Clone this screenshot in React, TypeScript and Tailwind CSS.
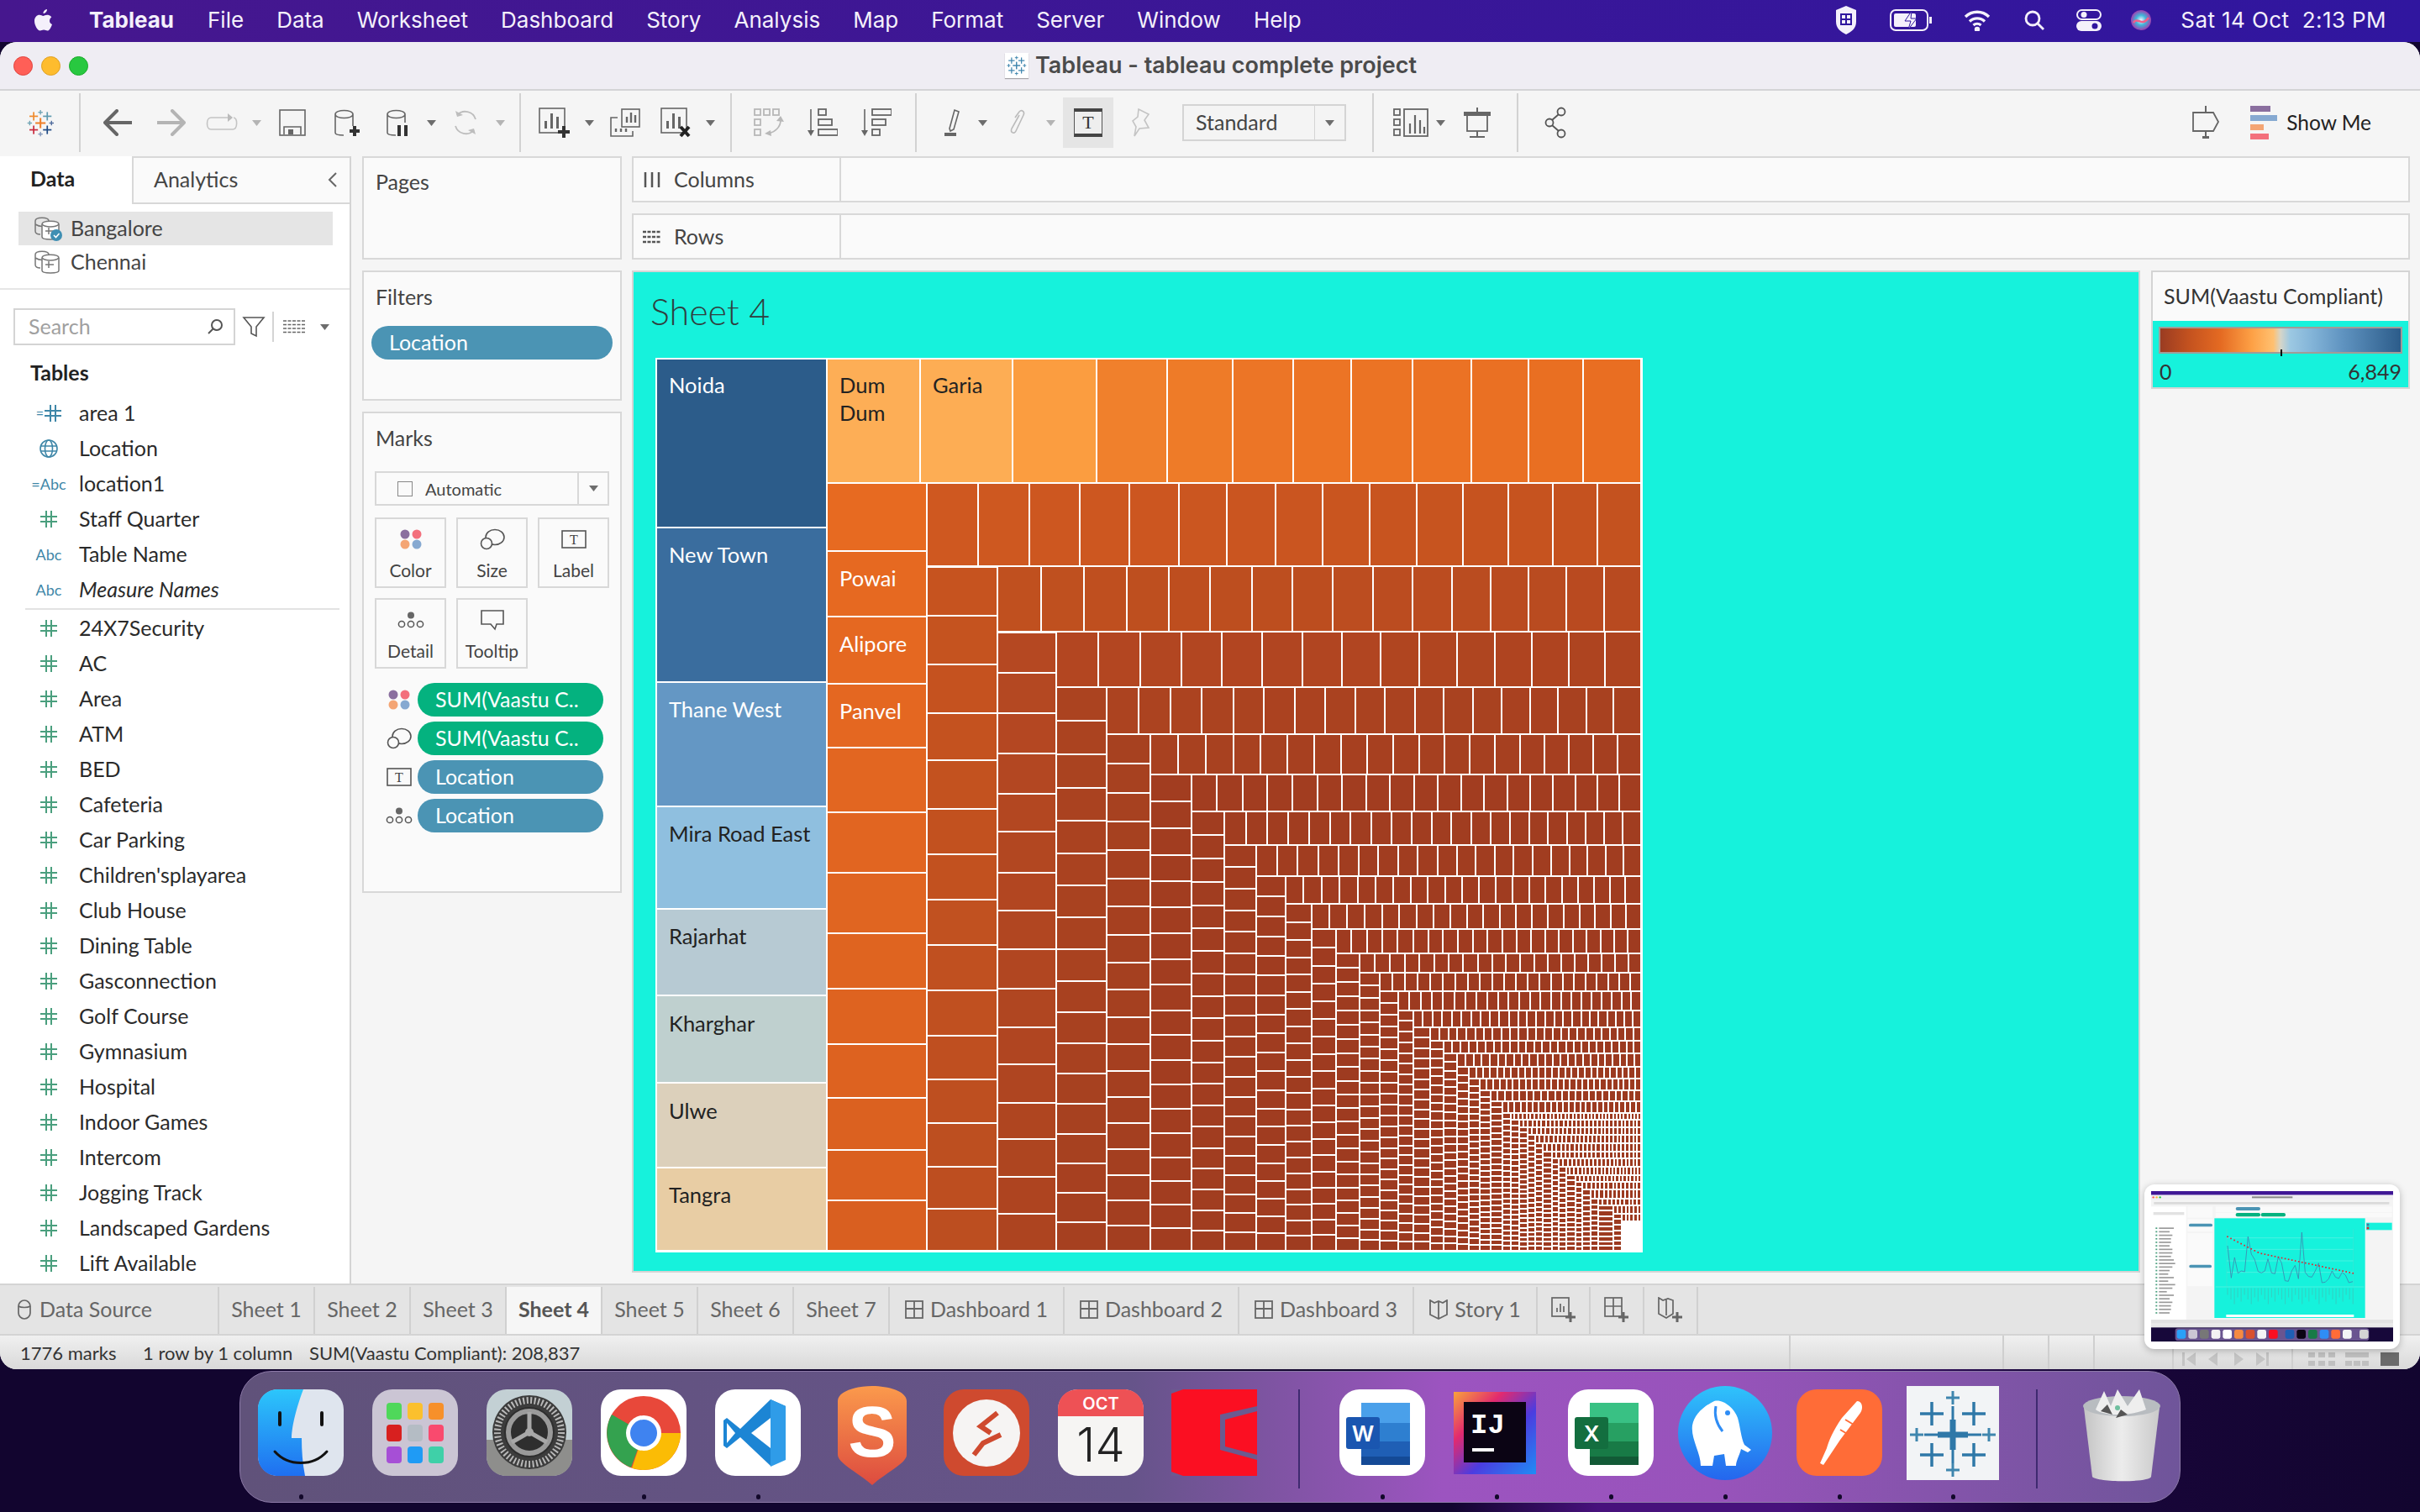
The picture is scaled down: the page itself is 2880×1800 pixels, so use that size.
import React from "react"

const hex = (c: string) => [1, 3, 5].map((i) => parseInt(c.slice(i, i + 2), 16))
const mix = (a: string, b: string, t: number) => {
  const x = hex(a)
  const y = hex(b)
  return `rgb(${x.map((v, i) => Math.round(v + (y[i] - v) * t)).join(",")})`
}

// treemap shells: every step is one column on the left and one row on top
const xs = [983.6, 1103, 1187, 1257, 1317, 1369, 1418, 1457, 1495, 1529.5, 1561, 1589.5, 1617.6, 1642, 1663.6, 1681.5, 1702, 1717.5, 1734, 1748, 1761, 1773.5, 1787.5, 1797.6, 1807.7, 1818, 1827, 1836, 1846.6, 1855, 1863.6, 1875, 1883, 1892.7, 1901.5, 1919.5, 1929.5]
const rowBottoms = [674, 752, 818, 874, 922, 966, 1006.4, 1042.9, 1076.4, 1106.4, 1134.6, 1158.2, 1180.4, 1202.5, 1222.9, 1238.6, 1254.3, 1270.4, 1284, 1298.2, 1310.7, 1325, 1333, 1342, 1351.4, 1360.7, 1371.4, 1379.3, 1389.3, 1398.6, 1407, 1416, 1426.8, 1435, 1444.6, 1453.6]
const rowCellW = [57, 48, 45, 35, 31, 28, 24, 22.4, 20, 19.6, 17.5, 17, 14, 12.5, 11, 10, 9.5, 9, 8, 7.3, 8, 7, 4.5, 5, 5, 5, 5, 5, 5, 4.5, 4.5, 5, 5, 5, 5, 5]
const colCellH = [0, 0, 0, 37, 32, 30, 26, 24, 22, 20, 20, 16, 14, 13, 12, 11.5, 10, 9.3, 8.6, 8, 7, 7, 6.5, 6.5, 6, 6, 6, 6, 6, 6, 6, 6, 6, 6, 6, 6]
const fixedCols: Record<number, number[]> = {
  0: [575, 656, 734, 814, 890, 967, 1039, 1111, 1177, 1243, 1307, 1369, 1429, 1489],
  1: [675, 733, 791, 849, 905, 963, 1017, 1071, 1125, 1179, 1233, 1285, 1337, 1389, 1439, 1489],
  2: [753, 801, 849, 897, 945, 990, 1039, 1084, 1130, 1177, 1223, 1267, 1313, 1356, 1401, 1445, 1489],
}
const colTones = [["#e76a21", "#d95f20"], ["#c6531f", "#bc4e20"], ["#b54822", "#ad4420"], ["#ab4320", "#a64020"], ["#a74120", "#a33e20"]]
const rowTones = [["#cf5820", "#c4521f"], ["#c0501f", "#b84a20"], ["#b34621", "#ae4420"], ["#ac4320", "#a84120"], ["#a84120", "#a53f20"]]

const split = (a: number, b: number, n: number) => {
  const weights = Array.from({ length: n }, (_, k) => 1.08 - (0.16 * k) / Math.max(n - 1, 1))
  const total = weights.reduce((s, v) => s + v, 0)
  const out = [a]
  weights.forEach((w) => out.push(out[out.length - 1] + ((b - a) * w) / total))
  return out
}

type Cell = { x: number; y: number; w: number; h: number; fill: string }
const cells: Cell[] = []
const put = (x0: number, y0: number, x1: number, y1: number, fill: string) => {
  const x = Math.round(x0) + 1
  const y = Math.round(y0) + 1
  cells.push({ x, y, w: Math.max(Math.round(x1) - x - 1, 1), h: Math.max(Math.round(y1) - y - 1, 1), fill })
}

const blues: [number, number, string][] = [[427, 628, "#2c5c8a"], [628, 812, "#3a6d9e"], [812, 960, "#6497c4"], [960, 1082, "#8fbfdf"], [1082, 1185, "#b7cad3"], [1185, 1289, "#bfd0cf"], [1289, 1390, "#dcd0bb"], [1390, 1489, "#e8cda4"]]
blues.forEach(([a, b, c]) => put(781, a, 983.6, b, c))

const topRow = [983.6, 1095, 1205, 1304.7, 1388.5, 1466.8, 1538.7, 1608, 1681, 1751, 1818.7, 1884, 1953]
const topColors = ["#fdae56", "#fdad54", "#fb9d40", "#f0802c", "#ee7b28", "#ec7526", "#ec7425", "#eb7324", "#eb7224", "#ea7023", "#e96f22", "#e96e22"]
topColors.forEach((c, i) => put(topRow[i], 427, topRow[i + 1], 574.5, c))

xs.slice(0, -1).forEach((x, i) => {
  const next = xs[i + 1]
  const top = i === 0 ? 575 : rowBottoms[i - 1]
  const colEdges = fixedCols[i] ?? split(top, 1489, Math.max(Math.round((1489 - top) / colCellH[i]), 1))
  const late = mix("#a53f20", "#9c3a20", Math.min(i / 14, 1))
  colEdges.slice(0, -1).forEach((y, k) => {
    const t = k / Math.max(colEdges.length - 2, 1)
    put(x, y, next, colEdges[k + 1], colTones[i] ? mix(colTones[i][0], colTones[i][1], t) : late)
  })
  const n = Math.max(Math.round((1953 - next) / rowCellW[i]), 1)
  const rowEdges = split(next, 1953, n)
  rowEdges.slice(0, -1).forEach((e, k) => {
    const t = k / Math.max(n - 1, 1)
    put(e, top, rowEdges[k + 1], rowBottoms[i], rowTones[i] ? mix(rowTones[i][0], rowTones[i][1], t) : late)
  })
})

const labels: [string, number, number, string][] = [
  ["Noida", 796, 468, "#ffffff"], ["New Town", 796, 670, "#ffffff"], ["Thane West", 796, 854, "#ffffff"],
  ["Mira Road East", 796, 1002, "#222222"], ["Rajarhat", 796, 1124, "#222222"], ["Kharghar", 796, 1228, "#222222"],
  ["Ulwe", 796, 1332, "#222222"], ["Tangra", 796, 1432, "#222222"], ["Dum", 999, 468, "#222222"], ["Dum", 999, 501, "#222222"],
  ["Garia", 1110, 468, "#222222"], ["Powai", 999, 698, "#ffffff"], ["Alipore", 999, 776, "#ffffff"], ["Panvel", 999, 856, "#ffffff"],
]

const Treemap = () => (
  <svg width="1175" height="1065" viewBox="780 426 1175 1065" className="block">
    <rect x="780" y="426" width="1175" height="1065" fill="#ffffff" />
    {cells.map((c, i) => (
      <rect key={i} x={c.x} y={c.y} width={c.w} height={c.h} fill={c.fill} />
    ))}
    {labels.map(([t, x, y, c], i) => (
      <text key={i} x={x} y={y} fill={c} fontFamily="Lato, sans-serif" fontSize="25.5">{t}</text>
    ))}
  </svg>
)

/* ---------- small icons ---------- */
const Cross = ({ x, y, s, t, c }: { x: number; y: number; s: number; t: number; c: string }) => (
  <g fill={c}>
    <rect x={x - s} y={y - t / 2} width={s * 2} height={t} />
    <rect x={x - t / 2} y={y - s} width={t} height={s * 2} />
  </g>
)

const TableauMark = ({ size, mono }: { size: number; mono?: string }) => (
  <svg width={size} height={size} viewBox="95 88 98 98">
    <Cross x={119} y={113} s={15} t={5} c={mono ?? "#ef8a2c"} />
    <Cross x={143} y={99} s={8} t={4} c={mono ?? "#6fa3b3"} />
    <Cross x={167} y={113} s={15} t={5} c={mono ?? "#5f9bb0"} />
    <Cross x={105} y={137} s={8} t={4} c={mono ?? "#6fa3b3"} />
    <Cross x={143} y={137} s={18} t={6} c={mono ?? "#ef7f2a"} />
    <Cross x={182} y={137} s={8} t={4} c={mono ?? "#4e6a9c"} />
    <Cross x={119} y={161} s={15} t={5} c={mono ?? "#c8283c"} />
    <Cross x={143} y={176} s={8} t={4} c={mono ?? "#7f94b8"} />
    <Cross x={167} y={161} s={15} t={5} c={mono ?? "#1f4a85"} />
  </svg>
)

const Tri = ({ c = "#6d6d6d" }: { c?: string }) => (
  <svg width="11" height="7" viewBox="0 0 11 7"><path d="M0 0h11L5.5 7z" fill={c} /></svg>
)
const Sep = ({ cls }: { cls: string }) => <div className={`w-[2px] h-[70px] bg-[#d2d2d2] ${cls}`} />

const Svg = ({ w, h, cls, children }: { w: number; h: number; cls?: string; children: React.ReactNode }) => (
  <svg width={w} height={h} viewBox={`0 0 ${w} ${h}`} fill="none" className={cls}>{children}</svg>
)

const Chart = ({ x = 0, y = 0, c = "#666666" }: { x?: number; y?: number; c?: string }) => (
  <g transform={`translate(${x} ${y})`} fill={c}>
    <rect x="7" y="16" width="3" height="9" />
    <rect x="14" y="7" width="3" height="18" />
    <rect x="21" y="11" width="3" height="14" />
  </g>
)

const SwatchDots = () => (
  <svg width="26" height="24" viewBox="0 0 26 24">
    <circle cx="6" cy="6" r="5.5" fill="#8a6f9f" /><circle cx="20" cy="6" r="5.5" fill="#f3707c" />
    <circle cx="6" cy="18" r="5.5" fill="#f4a574" /><circle cx="20" cy="18" r="5.5" fill="#86a9d1" />
  </svg>
)
const SizeGlyph = () => (
  <svg width="30" height="26" viewBox="0 0 30 26" fill="none" stroke="#555" strokeWidth="1.6">
    <ellipse cx="18" cy="10.5" rx="11" ry="9" /><circle cx="8" cy="18" r="6.5" fill="#fafafa" />
  </svg>
)
const LabelGlyph = () => (
  <svg width="30" height="22" viewBox="0 0 30 22" fill="none">
    <rect x="1" y="1" width="28" height="20" stroke="#555" strokeWidth="1.6" />
    <text x="15" y="17" textAnchor="middle" fontFamily="Liberation Serif, serif" fontSize="16" fill="#444">T</text>
  </svg>
)
const DetailGlyph = () => (
  <svg width="32" height="20" viewBox="0 0 32 20" fill="none" stroke="#555" strokeWidth="1.5">
    <circle cx="16" cy="4.5" r="4" fill="#666" stroke="none" />
    <circle cx="5" cy="15" r="3.6" /><circle cx="16" cy="15" r="3.6" /><circle cx="27" cy="15" r="3.6" />
  </svg>
)
const TooltipGlyph = () => (
  <svg width="30" height="26" viewBox="0 0 30 26" fill="none" stroke="#555" strokeWidth="1.6">
    <path d="M2 2h26v16H20l-2 6-5-6H2z" />
  </svg>
)
const HashIcon = ({ c = "#4a9f7e" }: { c?: string }) => (
  <svg width="20" height="20" viewBox="0 0 20 20" stroke={c} strokeWidth="2">
    <path d="M7 0v20M13 0v20M0 7h20M0 13h20" />
  </svg>
)
const Cyl = ({ check }: { check?: boolean }) => (
  <svg width="34" height="30" viewBox="0 0 34 30" fill="none" stroke="#777" strokeWidth="1.5">
    <path d="M2 6c0-5 16-5 16 0v4c-5 3-11 3-16 0zM2 10v8c0 2 2 4 6 4" />
    <path d="M10 10c0-5 20-5 20 0v15c0 4-20 4-20 0z" fill="#fff" />
    <path d="M10 10c4 4 16 4 20 0M14 18h10M18 14v8" />
    {check && <circle cx="27" cy="23" r="7" fill="#3f8fb3" stroke="none" />}
    {check && <path d="M24 23l2.5 2.5 4-4.5" stroke="#fff" strokeWidth="1.6" />}
  </svg>
)

const Row = ({ icon, name, italic }: { icon: React.ReactNode; name: string; italic?: boolean }) => (
  <div className="flex items-center h-[42px]">
    <div className="w-[94px] shrink-0 pr-[12px] flex justify-end">
      <div className="min-w-[48px] flex justify-center">{icon}</div>
    </div>
    <span className={italic ? "italic" : ""}>{name}</span>
  </div>
)
const Abc = ({ eq }: { eq?: boolean }) => (
  <span className="text-[18px] text-[#3f87a8]">{eq ? "=Abc" : "Abc"}</span>
)

const measures = ["24X7Security", "AC", "Area", "ATM", "BED", "Cafeteria", "Car Parking", "Children'splayarea", "Club House", "Dining Table", "Gasconnection", "Golf Course", "Gymnasium", "Hospital", "Indoor Games", "Intercom", "Jogging Track", "Landscaped Gardens", "Lift Available"]

const DataPane = () => (
  <div className="w-[418px] h-full shrink-0 bg-white border-r-[2px] border-[#d4d4d4] font-[Lato] text-[25px] text-[#2a2a2a] overflow-hidden">
    <div className="flex h-[57px] text-[25px]">
      <div className="w-[157px] flex items-center pl-[36px] pb-[4px] font-bold text-[#222]">Data</div>
      <div className="flex-1 flex items-center justify-between pl-[24px] pr-[14px] pb-[2px] bg-[#fafafa] border-l-[2px] border-b-[2px] border-t-[2px] border-[#d8d8d8] text-[#444]">
        Analytics
        <svg width="12" height="20" viewBox="0 0 12 20" fill="none" stroke="#666" strokeWidth="2"><path d="M10 2L2 10l8 8" /></svg>
      </div>
    </div>
    <div className="mx-[22px] mt-[9px] h-[40px] w-[374px] bg-[#e5e5e5] flex items-center pl-[18px] gap-[10px] text-[#444]"><Cyl check />Bangalore</div>
    <div className="mx-[22px] h-[40px] flex items-center pl-[18px] gap-[10px] text-[#444]"><Cyl />Chennai</div>
    <div className="mt-[11px] h-[2px] bg-[#e6e6e6]" />
    <div className="flex items-center mt-[22px] ml-[16px] h-[44px]">
      <div className="w-[264px] h-[44px] border-[2px] border-[#d4d4d4] flex items-center justify-between pl-[16px] pr-[12px] text-[#a0a0a0]">
        Search
        <svg width="20" height="20" viewBox="0 0 20 20" fill="none" stroke="#555" strokeWidth="2"><circle cx="12" cy="8" r="6" /><path d="M7.5 12.5L2 18" /></svg>
      </div>
      <svg className="ml-[8px]" width="28" height="26" viewBox="0 0 28 26" fill="none" stroke="#555" strokeWidth="1.6"><path d="M2 2h24L17 13v11l-6-3v-8z" /></svg>
      <div className="w-[2px] h-[36px] bg-[#d4d4d4] ml-[8px]" />
      <svg className="ml-[11px]" width="26" height="16" viewBox="0 0 26 16" stroke="#666" strokeWidth="1.5"><path d="M0 1h26M0 5.5h26M0 10h26M0 14.5h26" strokeDasharray="4 1.5" /></svg>
      <div className="ml-[18px]"><Tri /></div>
    </div>
    <div className="mt-[18px] pl-[36px] h-[28px] leading-[28px] font-bold text-[#222]">Tables</div>
    <div className="mt-[14px]">
      <Row icon={<div className="flex items-center gap-[1px] text-[#3f87a8]"><span className="text-[16px]">=</span><HashIcon c="#3f87a8" /></div>} name="area 1" />
      <Row icon={<svg width="24" height="24" viewBox="0 0 24 24" fill="none" stroke="#3f87a8" strokeWidth="1.6"><circle cx="12" cy="12" r="10" /><ellipse cx="12" cy="12" rx="4.5" ry="10" /><path d="M2.5 9h19M2.5 15h19" /></svg>} name="Location" />
      <Row icon={<Abc eq />} name="location1" />
      <Row icon={<HashIcon />} name="Staff Quarter" />
      <Row icon={<Abc />} name="Table Name" />
      <Row icon={<Abc />} name="Measure Names" italic />
    </div>
    <div className="ml-[30px] mr-[12px] my-[1px] h-[2px] bg-[#e2e2e2]" />
    <div className="mt-[1px]">
      {measures.map((m) => <Row key={m} icon={<HashIcon />} name={m} />)}
    </div>
  </div>
)

const MarkBtn = ({ icon, name }: { icon: React.ReactNode; name: string }) => (
  <div className="h-[84px] border-[2px] border-[#d8d8d8] flex flex-col items-center">
    <div className="h-[48px] flex items-center justify-center">{icon}</div>
    <div className="text-[21px] text-[#444] leading-[26px]">{name}</div>
  </div>
)
const Pill = ({ green, children }: { green?: boolean; children: React.ReactNode }) => (
  <div className={`w-[221px] h-[40px] rounded-full flex items-center pl-[21px] text-white text-[25px] ${green ? "bg-[#04b27f]" : "bg-[#4b94b4]"}`}>{children}</div>
)
const ShelfTitle = ({ children }: { children: React.ReactNode }) => (
  <div className="pl-[14px] text-[25px] text-[#444] leading-[30px]">{children}</div>
)

const Cards = () => (
  <div className="w-[334px] shrink-0 pl-[13px] pr-[12px] flex flex-col gap-[13px] font-[Lato]">
    <div className="h-[123px] shrink-0 bg-[#fafafa] border-[2px] border-[#d8d8d8] pt-[13px]"><ShelfTitle>Pages</ShelfTitle></div>
    <div className="h-[155px] shrink-0 bg-[#fafafa] border-[2px] border-[#d8d8d8] pt-[14px]">
      <ShelfTitle>Filters</ShelfTitle>
      <div className="mx-[9px] mt-[20px] h-[40px] rounded-full bg-[#4b94b4] text-white text-[25px] flex items-center pl-[21px]">Location</div>
    </div>
    <div className="h-[573px] shrink-0 bg-[#fafafa] border-[2px] border-[#d8d8d8] pt-[14px]">
      <ShelfTitle>Marks</ShelfTitle>
      <div className="mx-[13px] mt-[25px] h-[41px] border-[2px] border-[#d8d8d8] flex items-center">
        <div className="w-[18px] h-[18px] border-[1.5px] border-[#888] ml-[25px]" />
        <span className="ml-[15px] flex-1 text-[20px] text-[#444]">Automatic</span>
        <div className="w-[36px] h-full border-l-[2px] border-[#d8d8d8] flex items-center justify-center"><Tri /></div>
      </div>
      <div className="mx-[13px] mt-[14px] grid grid-cols-3 gap-x-[12px] gap-y-[12px]">
        <MarkBtn icon={<SwatchDots />} name="Color" />
        <MarkBtn icon={<SizeGlyph />} name="Size" />
        <MarkBtn icon={<LabelGlyph />} name="Label" />
        <MarkBtn icon={<DetailGlyph />} name="Detail" />
        <MarkBtn icon={<TooltipGlyph />} name="Tooltip" />
      </div>
      <div className="mt-[17px] ml-[24px] flex flex-col gap-[6px]">
        {[
          [<SwatchDots key="a" />, "SUM(Vaastu C..", true],
          [<SizeGlyph key="b" />, "SUM(Vaastu C..", true],
          [<LabelGlyph key="c" />, "Location", false],
          [<DetailGlyph key="d" />, "Location", false],
        ].map(([ic, t, g], i) => (
          <div key={i} className="flex items-center">
            <div className="w-[36px] flex justify-center">{ic as React.ReactNode}</div>
            <div className="ml-[4px]"><Pill green={g as boolean}>{t as string}</Pill></div>
          </div>
        ))}
      </div>
    </div>
  </div>
)

const Shelf = ({ icon, name }: { icon: React.ReactNode; name: string }) => (
  <div className="h-[55px] shrink-0 bg-[#fafafa] border-[2px] border-[#d8d8d8] flex items-stretch font-[Lato] text-[25px] text-[#444]">
    <div className="w-[247px] border-r-[2px] border-[#d8d8d8] flex items-center pl-[11px] gap-[15px]">{icon}{name}</div>
  </div>
)

const Legend = () => (
  <div className="w-[308px] h-[141px] border-[2px] border-[#d4d4d4] font-[Lato] text-[25px] text-[#333] shrink-0">
    <div className="h-[58px] bg-[#fafafa] flex items-center pl-[13px]">SUM(Vaastu Compliant)</div>
    <div className="h-[79px] bg-[#16f2dc] pt-[7px] px-[7px]">
      <div className="relative h-[32px] border-[2px] border-[#a09c98] bg-[linear-gradient(90deg,#9a3c22_0%,#c4521f_12%,#e46a22_25%,#fda045_38%,#ffc070_47%,#d6d5c8_50%,#9cc8e2_54%,#83b4d8_63%,#5f93c0_76%,#2c5c8a_100%)]">
        <div className="absolute left-[143px] top-[25px] w-[2px] h-[8px] bg-black" />
      </div>
      <div className="flex justify-between mt-[4px] px-[1px] leading-[34px]"><span>0</span><span>6,849</span></div>
    </div>
  </div>
)

/* ---------- toolbar ---------- */
const Toolbar = () => (
  <div className="h-[78px] bg-[#f5f5f5] flex items-center pb-[2px] shrink-0">
    <div className="ml-[32px]"><TableauMark size={33} /></div>
    <Sep cls="ml-[29px]" />
    <Svg w={34} h={32} cls="ml-[27px]"><path d="M16 2L2 16l14 14M2 16h32" stroke="#666" strokeWidth="4" strokeLinecap="round" strokeLinejoin="round" /></Svg>
    <Svg w={34} h={32} cls="ml-[30px]"><path d="M18 2l14 14-14 14M32 16H0" stroke="#b4b4b4" strokeWidth="4" strokeLinecap="round" strokeLinejoin="round" /></Svg>
    <Svg w={40} h={22} cls="ml-[23px]"><path d="M28 5H7C1 5 1 19 7 19h26c6 0 6-14 1-14" stroke="#c4c4c4" strokeWidth="1.6" /><path d="M27 0l6 5-6 5z" fill="#bbb" /></Svg>
    <div className="ml-[16px]"><Tri c="#b4b4b4" /></div>
    <Svg w={32} h={32} cls="ml-[21px]"><rect x="1" y="1" width="30" height="30" stroke="#666" strokeWidth="1.6" /><path d="M6 30V21h20v9" stroke="#666" strokeWidth="1.6" /><rect x="11" y="24" width="6" height="6" fill="#666" /></Svg>
    <Svg w={30} h={32} cls="ml-[34px]"><path d="M1 6c0-6 21-6 21 0 0 6-21 6-21 0zM1 6v22c0 2 4 3 10 3M22 6v14" stroke="#666" strokeWidth="1.6" /><path d="M18 26h12M24 20v12" stroke="#333" strokeWidth="4" /></Svg>
    <Svg w={26} h={32} cls="ml-[32px]"><path d="M1 6c0-6 21-6 21 0 0 6-21 6-21 0zM1 6v22c0 2 4 3 10 3M22 6v10" stroke="#666" strokeWidth="1.6" /><path d="M15 19v13M23 19v13" stroke="#333" strokeWidth="4" /></Svg>
    <div className="ml-[22px]"><Tri /></div>
    <Svg w={32} h={32} cls="ml-[19px]"><path d="M28 12A13 13 0 0 0 6 7M4 20a13 13 0 0 0 22 5" stroke="#bdbdbd" strokeWidth="1.8" /><path d="M4 2l2 7 7-2zM28 30l-2-7-7 2z" fill="#bdbdbd" /></Svg>
    <div className="ml-[20px]"><Tri c="#b4b4b4" /></div>
    <Sep cls="ml-[17px]" />
    <Svg w={37} h={36} cls="ml-[21px]"><rect x="1" y="1" width="30" height="29" stroke="#666" strokeWidth="1.6" /><Chart /><path d="M23 29h14M30 22v14" stroke="#333" strokeWidth="4" /></Svg>
    <div className="ml-[18px]"><Tri /></div>
    <Svg w={36} h={34} cls="ml-[19px]"><rect x="14" y="1" width="21" height="21" stroke="#666" strokeWidth="1.6" /><path d="M9 11H1v22h26v-6" stroke="#666" strokeWidth="1.6" /><path d="M20 17v-7M25 17V5M30 17v-9M7 28v-4M13 28v-4M19 28v-4" stroke="#666" strokeWidth="2.4" /></Svg>
    <Svg w={36} h={36} cls="ml-[24px]"><rect x="1" y="1" width="30" height="29" stroke="#666" strokeWidth="1.6" /><Chart /><path d="M24 23l10 11M34 23L24 34" stroke="#222" strokeWidth="4" /></Svg>
    <div className="ml-[18px]"><Tri /></div>
    <Sep cls="ml-[18px]" />
    <Svg w={36} h={34} cls="ml-[26px]"><g stroke="#b8b8b8" strokeWidth="1.8"><rect x="1" y="1" width="7" height="7" /><rect x="12" y="1" width="7" height="7" /><rect x="23" y="1" width="7" height="7" /><rect x="1" y="13" width="7" height="7" /><rect x="1" y="25" width="7" height="7" /><path d="M32 14c0 8-6 14-15 16" /></g><path d="M27 15l5-6 4 7zM13 30l7-4 1 7z" fill="#b8b8b8" /></Svg>
    <Svg w={36} h={34} cls="ml-[28px]"><path d="M4 1v28" stroke="#666" strokeWidth="1.6" /><path d="M0 26h8l-4 7z" fill="#666" /><g stroke="#666" strokeWidth="1.8"><rect x="13" y="1" width="9" height="7" /><rect x="13" y="13" width="16" height="7" /><rect x="13" y="25" width="23" height="7" /></g></Svg>
    <Svg w={36} h={34} cls="ml-[28px]"><path d="M4 1v28" stroke="#666" strokeWidth="1.6" /><path d="M0 26h8l-4 7z" fill="#666" /><g stroke="#666" strokeWidth="1.8"><rect x="13" y="1" width="23" height="7" /><rect x="13" y="13" width="16" height="7" /><rect x="13" y="25" width="9" height="7" /></g></Svg>
    <Sep cls="ml-[28px]" />
    <Svg w={24} h={34} cls="ml-[30px]"><path d="M9 24L15 2l5 2-6 21-4 2zM3 32h14" stroke="#666" strokeWidth="1.6" /><path d="M3 29h14v4H3z" fill="#666" /></Svg>
    <div className="ml-[19px]"><Tri /></div>
    <Svg w={24} h={34} cls="ml-[25px]"><path d="M8 11l5-7c3-3 7 0 5 4L9 27c-2 4-7 2-5-3L13 8" stroke="#bbb" strokeWidth="1.6" /></Svg>
    <div className="ml-[21px]"><Tri c="#b4b4b4" /></div>
    <div className="ml-[9px] w-[60px] h-[60px] bg-[#e5e5e5] flex items-center justify-center">
      <div className="w-[34px] h-[34px] bg-[#eeeeee] border-[1.5px] border-x-[#555] border-y-[4px] border-y-[#444] font-['Liberation_Serif'] text-[22px] leading-[26px] text-center text-[#333]">T</div>
    </div>
    <Svg w={24} h={34} cls="ml-[22px]"><path d="M8 1l12 6-5 7 5 9-11 1-6 9 2-11-4-7 6-5z" stroke="#c4c4c4" strokeWidth="1.6" /></Svg>
    <div className="ml-[36px] w-[195px] h-[44px] border-[2px] border-[#d4d4d4] bg-[#f4f4f4] flex items-center">
      <span className="flex-1 pl-[14px] font-[Lato] text-[25px] text-[#444]">Standard</span>
      <div className="w-[36px] h-full border-l-[1px] border-[#d4d4d4] flex items-center justify-center"><Tri /></div>
    </div>
    <Sep cls="ml-[31px]" />
    <Svg w={42} h={34} cls="ml-[23px]"><g stroke="#666" strokeWidth="1.8"><rect x="1" y="1" width="7" height="7" /><rect x="1" y="13" width="7" height="7" /><rect x="1" y="25" width="7" height="7" /><rect x="13" y="1" width="28" height="32" /></g><path d="M20 30V18M26 30V8M32 30V14M37 30V22" stroke="#666" strokeWidth="2.2" /></Svg>
    <div className="ml-[9px]"><Tri /></div>
    <Svg w={34} h={36} cls="ml-[21px]"><path d="M17 0v6M17 28v8M8 35h18" stroke="#666" strokeWidth="2" /><rect x="5" y="6" width="24" height="22" stroke="#666" strokeWidth="1.8" /><rect x="1" y="5" width="32" height="5" fill="#666" /></Svg>
    <Sep cls="ml-[30px]" />
    <Svg w={28} h={38} cls="ml-[31px]"><circle cx="20" cy="6" r="4.5" stroke="#555" strokeWidth="1.8" /><circle cx="6" cy="19" r="4.5" stroke="#555" strokeWidth="1.8" /><circle cx="20" cy="32" r="4.5" stroke="#555" strokeWidth="1.8" /><path d="M9 16l8-7M9 22l8 7" stroke="#555" strokeWidth="1.8" /></Svg>
    <div className="flex-1" />
    <Svg w={34} h={40}><path d="M17 0v8M17 30v8" stroke="#666" strokeWidth="2" /><path d="M2 8h24l6 11-6 11H2z" stroke="#666" strokeWidth="1.8" /><rect x="13" y="36" width="8" height="3" fill="#666" /></Svg>
    <div className="ml-[36px] flex flex-col w-[32px] gap-[4px]">
      <div className="h-[7px] w-[24px] bg-[#8a6f9f]" /><div className="h-[7px] bg-[#86a9d1]" /><div className="h-[7px] w-[16px] bg-[#f4a574]" /><div className="h-[7px] w-[22px] bg-[#f3707c]" />
    </div>
    <span className="ml-[11px] mr-[58px] font-[Lato] text-[24.5px] text-[#222]">Show Me</span>
  </div>
)

/* ---------- tabs ---------- */
const Tab = ({ w, active, icon, children }: { w: string; active?: boolean; icon?: React.ReactNode; children?: React.ReactNode }) => (
  <div className={`${w} shrink-0 h-full flex items-center justify-center gap-[8px] pb-[2px] border-r-[2px] border-[#d0d0d0] ${active ? "bg-[#f6f6f6] font-bold text-[#555]" : "text-[#666]"}`}>
    {icon}{children}
  </div>
)
const DashIcon = () => (
  <svg width="22" height="22" viewBox="0 0 22 22" fill="none" stroke="#666" strokeWidth="1.8"><rect x="1" y="1" width="20" height="20" /><path d="M1 10h20M11 1v20" /></svg>
)
const BookIcon = () => (
  <svg width="22" height="24" viewBox="0 0 22 24" fill="none" stroke="#666" strokeWidth="1.8"><path d="M1 1l5 3 5-2 5 2 5-3v17l-10 5-10-5zM11 3v19" /></svg>
)

const TabBar = () => (
  <div className="h-[62px] bg-[#e4e4e4] border-t-[2px] border-b-[2px] border-[#d4d4d4] flex items-stretch font-[Lato] text-[25px] shrink-0 pt-[2px]">
    <div className="w-[261px] shrink-0 flex items-center pl-[20px] pb-[2px] gap-[9px] border-r-[2px] border-[#d0d0d0] text-[#666]">
      <svg width="18" height="24" viewBox="0 0 18 24" fill="none" stroke="#666" strokeWidth="1.7"><rect x="2" y="1" width="14" height="22" rx="7" /><path d="M2 8c3 2 11 2 14 0" /></svg>
      Data Source
    </div>
    {["Sheet 1", "Sheet 2", "Sheet 3"].map((s) => <Tab key={s} w="w-[114px]">{s}</Tab>)}
    <Tab w="w-[114px]" active>Sheet 4</Tab>
    {["Sheet 5", "Sheet 6", "Sheet 7"].map((s) => <Tab key={s} w="w-[114px]">{s}</Tab>)}
    <Tab w="w-[208px]" icon={<DashIcon />}>Dashboard 1</Tab>
    <Tab w="w-[208px]" icon={<DashIcon />}>Dashboard 2</Tab>
    <Tab w="w-[208px]" icon={<DashIcon />}>Dashboard 3</Tab>
    <Tab w="w-[147px]" icon={<BookIcon />}>Story 1</Tab>
    <Tab w="w-[63px]" icon={<svg width="30" height="30" viewBox="0 0 30 30" fill="none" stroke="#666" strokeWidth="1.7"><rect x="1" y="1" width="20" height="22" /><path d="M7 18v-5M11 18V8M15 18v-7" /><path d="M17 24h12M23 18v12" strokeWidth="3" /></svg>} />
    <Tab w="w-[64px]" icon={<svg width="30" height="30" viewBox="0 0 30 30" fill="none" stroke="#666" strokeWidth="1.7"><rect x="1" y="1" width="20" height="22" /><path d="M1 11h20M11 1v22" /><path d="M17 24h12M23 18v12" strokeWidth="3" /></svg>} />
    <Tab w="w-[64px]" icon={<svg width="30" height="30" viewBox="0 0 30 30" fill="none" stroke="#666" strokeWidth="1.7"><path d="M1 1l5 3 6-2 6 2v16l-8 5-9-5zM10 3v19" /><path d="M17 24h12M23 18v12" strokeWidth="3" /></svg>} />
  </div>
)

const StatusBar = () => (
  <div className="h-[40px] shrink-0 flex items-stretch bg-[linear-gradient(180deg,#f0f0f0,#d9d9d9)] font-[Lato] text-[22px] text-[#333] rounded-b-[20px] overflow-hidden">
    <div className="w-[2129px] flex items-center pl-[24px]">
      <span className="w-[146px]">1776 marks</span>
      <span className="w-[198px]">1 row by 1 column</span>
      <span>SUM(Vaastu Compliant): 208,837</span>
    </div>
    <div className="w-[254px] border-l-[2px] border-[#cfcfcf]" />
    <div className="w-[54px] border-l-[2px] border-[#cfcfcf]" />
    <div className="w-[54px] border-l-[2px] border-[#cfcfcf]" />
    <div className="w-[94px] border-l-[2px] border-[#cfcfcf]" />
    <div className="w-[142px] border-l-[2px] border-[#cfcfcf] flex items-end pb-[4px] justify-around px-[6px]">
      <svg width="120" height="16" viewBox="0 0 120 16" fill="#c4c4c4"><path d="M0 0h3v16H0zM16 0v16L5 8zM42 0v16L31 8zM62 0l11 8-11 8zM88 0l11 8-11 8zM100 0h3v16h-3z" /></svg>
    </div>
    <div className="flex-1 border-l-[2px] border-[#cfcfcf] flex items-end pb-[4px] pl-[18px]">
      <svg width="110" height="16" viewBox="0 0 110 16" fill="#c0c0c0"><path d="M0 0h8v6H0zM12 0h8v6h-8zM24 0h8v6h-8zM0 10h8v6H0zM12 10h8v6h-8zM24 10h8v6h-8zM44 0h28v6H44zM44 10h8v6h-8zM54 10h8v6h-8zM64 10h8v6h-8z" /><rect x="86" y="0" width="22" height="16" fill="#6b6b6b" /></svg>
    </div>
  </div>
)

/* ---------- dock ---------- */
const Squircle = ({ fill = "#fff" }: { fill?: string }) => <rect x="0" y="0" width="102" height="103" rx="24" fill={fill} />

function TableauMarkInner() {
  return (
    <g>
      <Cross x={51} y={52} s={18} t={7} c="#2f78a8" />
      <Cross x={51} y={52} s={34} t={3} c="#2f78a8" />
      <Cross x={26} y={27} s={14} t={3.5} c="#2f78a8" />
      <Cross x={76} y={27} s={14} t={3.5} c="#2f78a8" />
      <Cross x={26} y={76} s={14} t={3.5} c="#2f78a8" />
      <Cross x={76} y={76} s={14} t={3.5} c="#2f78a8" />
      <Cross x={51} y={8} s={8} t={3} c="#3f86ae" />
      <Cross x={51} y={94} s={8} t={3} c="#3f86ae" />
      <Cross x={8} y={52} s={8} t={3} c="#3f86ae" />
      <Cross x={94} y={52} s={8} t={3} c="#3f86ae" />
    </g>
  )
}

const dockIcons: Record<string, React.ReactNode> = {
  finder: (
    <>
      <defs><linearGradient id="fb" x1="0" y1="0" x2="0" y2="1"><stop offset="0" stopColor="#2cc6fb" /><stop offset="1" stopColor="#1f6ff0" /></linearGradient></defs>
      <Squircle fill="#dfe5ee" />
      <path d="M24 0h30c-10 26-14 48-14 58h12c0 15 1 30 4 45H24C10 103 0 93 0 79V24C0 10 10 0 24 0z" fill="url(#fb)" />
      <path d="M26 28v14M76 28v14" stroke="#111" strokeWidth="4" strokeLinecap="round" />
      <path d="M20 74c16 18 46 18 62 0" stroke="#111" strokeWidth="3" fill="none" strokeLinecap="round" />
    </>
  ),
  launch: (
    <>
      <Squircle fill="#cbc5d4" />
      {["#4fd85a", "#fbc02d", "#f7902a", "#d8201f", "#b4bcc4", "#f94a6e", "#a64fd6", "#1f9bf5", "#3fd0a8"].map((c, i) => (
        <rect key={c} x={17 + (i % 3) * 25} y={16 + Math.floor(i / 3) * 26} width="18" height="20" rx="4" fill={c} />
      ))}
    </>
  ),
  settings: (
    <>
      <Squircle fill="#c3d0d4" />
      <path d="M0 60h102v19c0 14-10 24-24 24H24C10 103 0 93 0 79z" fill="#8e8e8c" />
      <circle cx="51" cy="51" r="44" fill="#3c3c3c" />
      <circle cx="51" cy="51" r="38" fill="none" stroke="#b8b8b8" strokeWidth="8" strokeDasharray="2 2.5" />
      <circle cx="51" cy="51" r="30" fill="#2e2e2e" />
      <circle cx="51" cy="51" r="25" fill="none" stroke="#9a9a9a" strokeWidth="6" />
      <path d="M51 51V27M51 51l21 12M51 51L30 63" stroke="#a8a8a8" strokeWidth="5" />
      <circle cx="51" cy="51" r="5" fill="#a8a8a8" />
    </>
  ),
  chrome: (
    <>
      <Squircle />
      <circle cx="51" cy="52" r="44" fill="#e8483a" />
      <path d="M51 52L13 30A44 44 0 0 0 36 93z" fill="#34a24f" />
      <path d="M51 52h44a44 44 0 0 1-58 41.7z" fill="#fbbc05" />
      <circle cx="51" cy="52" r="21" fill="#fff" /><circle cx="51" cy="52" r="16" fill="#3f83f0" />
    </>
  ),
  vscode: (
    <>
      <Squircle />
      <path d="M66 12L30 47 14 34l-4 3v30l4 3 16-13 36 34 18-8V20z" fill="#1c85d4" />
      <path d="M66 12l18 8v64l-18 8z" fill="#2f9ce8" />
      <path d="M66 34L43 52l23 18z" fill="#fff" />
      <path d="M14 40l10 12-10 12z" fill="#fff" />
    </>
  ),
  sublime: (
    <>
      <defs><linearGradient id="sb" x1="0" y1="0" x2="0" y2="1"><stop offset="0" stopColor="#fb9a4c" /><stop offset="1" stopColor="#dd4b3f" /></linearGradient></defs>
      <path d="M51 -4C70 -4 92 2 92 14v64c0 10-26 22-41 36C36 100 10 88 10 78V14C10 2 32 -4 51 -4z" fill="url(#sb)" />
      <text x="51" y="80" textAnchor="middle" fontFamily="Liberation Sans, sans-serif" fontWeight="700" fontSize="86" fill="#fff">S</text>
    </>
  ),
  anydesk: (
    <>
      <Squircle fill="#cf4a2f" />
      <circle cx="51" cy="52" r="40" fill="#f6f4f3" />
      <path d="M64 28L44 44l12 8M68 54L47 64 36 78" stroke="#cf4a2f" strokeWidth="6" fill="none" />
    </>
  ),
  calendar: (
    <>
      <Squircle fill="#f6f5f3" />
      <path d="M24 0h54c14 0 24 10 24 24v8H0v-8C0 10 10 0 24 0z" fill="#ee5155" />
      <text x="51" y="24" textAnchor="middle" fontFamily="Inter, sans-serif" fontWeight="600" fontSize="20" fill="#fff">OCT</text>
      <text x="51" y="86" textAnchor="middle" fontFamily="Inter, sans-serif" fontWeight="300" fontSize="56" fill="#222">14</text>
    </>
  ),
  red: (
    <>
      <rect x="0" y="0" width="102" height="103" fill="#fb0f22" />
      <path d="M0 0h14L0 5zM0 103h14L0 98zM58 30l44-10v6L64 36v32l38 10v6L58 72z" fill="#6b5a90" />
    </>
  ),
  word: (
    <>
      <Squircle />
      <rect x="26" y="16" width="58" height="24" fill="#4aa0ea" /><rect x="26" y="40" width="58" height="22" fill="#2e7fd0" />
      <rect x="26" y="62" width="58" height="20" fill="#1f5fb5" /><rect x="26" y="80" width="58" height="10" fill="#144a96" />
      <rect x="8" y="33" width="40" height="38" rx="3" fill="#1a56b0" />
      <text x="28" y="62" textAnchor="middle" fontFamily="Inter, sans-serif" fontWeight="600" fontSize="26" fill="#fff">W</text>
    </>
  ),
  ij: (
    <>
      <defs><linearGradient id="ij" x1="0" y1="0" x2="1" y2="1"><stop offset="0" stopColor="#f9a33b" /><stop offset=".3" stopColor="#e22a6f" /><stop offset=".6" stopColor="#4c3ce0" /><stop offset="1" stopColor="#1f8df5" /></linearGradient></defs>
      <rect x="0" y="3" width="98" height="98" fill="url(#ij)" />
      <rect x="12" y="15" width="74" height="72" fill="#0b0414" />
      <text x="20" y="52" fontFamily="Liberation Mono, monospace" fontWeight="700" fontSize="34" fill="#fff">IJ</text>
      <rect x="22" y="70" width="26" height="4" fill="#fff" />
    </>
  ),
  excel: (
    <>
      <Squircle />
      <rect x="26" y="16" width="58" height="24" fill="#39c184" /><rect x="26" y="40" width="58" height="22" fill="#27a062" />
      <rect x="26" y="62" width="58" height="20" fill="#187a46" /><rect x="26" y="80" width="58" height="10" fill="#125a36" />
      <rect x="8" y="33" width="40" height="38" rx="3" fill="#136e3f" />
      <text x="28" y="62" textAnchor="middle" fontFamily="Inter, sans-serif" fontWeight="600" fontSize="26" fill="#fff">X</text>
    </>
  ),
  elephant: (
    <>
      <defs><linearGradient id="pg" x1="0" y1="0" x2="0" y2="1"><stop offset="0" stopColor="#2fc3fb" /><stop offset="1" stopColor="#2466ee" /></linearGradient></defs>
      <circle cx="51" cy="52" r="56" fill="url(#pg)" />
      <path d="M38 14c10-3 24 8 28 20 3 10 4 24 8 32l8 6-4 3-8-4c-2 8-6 14-6 20H52l-2-14-12 2-2 12H22c0-16-12-32-10-48 2-12 12-22 26-29z" fill="#fff" />
      <circle cx="54" cy="28" r="3" fill="#2f8df5" />
      <path d="M40 20c-2 10 0 20 8 30" stroke="#2f8df5" strokeWidth="3" fill="none" />
    </>
  ),
  postman: (
    <>
      <Squircle fill="#ff6c37" />
      <path d="M72 14c6 0 8 8 4 14L52 60 32 90l-4-2 8-18c2-8 8-22 18-36z" fill="#fff" />
      <path d="M28 88l-4 4M58 36l10 6M52 48l10 6" stroke="#ff6c37" strokeWidth="2" />
    </>
  ),
  tableau: (
    <>
      <rect x="-4" y="-4" width="110" height="112" fill="#f2f4f6" />
      <g transform="translate(0 2)"><TableauMarkInner /></g>
    </>
  ),
  trash: (
    <>
      <defs><linearGradient id="tr" x1="0" y1="0" x2="1" y2="0"><stop offset="0" stopColor="#c4c4c4" /><stop offset=".5" stopColor="#ececec" /><stop offset="1" stopColor="#cacaca" /></linearGradient></defs>
      <path d="M6 22h90l-10 82c-2 7-64 7-70 0z" fill="url(#tr)" />
      <ellipse cx="51" cy="20" rx="46" ry="12" fill="#b8bcc0" />
      <path d="M20 24l10-22 8 18 8-20 12 20 14-20 8 24c-20 8-50 8-60 0z" fill="#eeeeee" />
      <path d="M26 26l8-8 6 12zM50 24l8 6-14 4z" fill="#555" />
      <circle cx="46" cy="22" r="3" fill="#6fbf9f" />
    </>
  ),
}

const DockApp = ({ id, dot, cls }: { id: string; dot?: boolean; cls: string }) => (
  <div className={`w-[102px] flex flex-col items-center shrink-0 ${cls}`}>
    <svg width="102" height="103" viewBox="0 0 102 103" className="overflow-visible">{dockIcons[id]}</svg>
    <div className={`w-[5px] h-[6px] rounded-full mt-[22px] ${dot ? "bg-[#12082a]" : ""}`} />
  </div>
)

const Dock = () => (
  <div className="ml-[285px] mt-[2px] w-[2310px] h-[157px] rounded-[38px] border-[1.5px] border-[#8d7aa8] bg-[linear-gradient(90deg,#60527a_0%,#66548a_46%,#9c54c0_62%,#9853bb_76%,#6f559a_100%)] flex items-start pt-[21px]">
    <DockApp id="finder" dot cls="ml-[21px]" />
    <DockApp id="launch" cls="ml-[34px]" />
    <DockApp id="settings" cls="ml-[34px]" />
    <DockApp id="chrome" dot cls="ml-[34px]" />
    <DockApp id="vscode" dot cls="ml-[34px]" />
    <DockApp id="sublime" cls="ml-[34px]" />
    <DockApp id="anydesk" cls="ml-[34px]" />
    <DockApp id="calendar" cls="ml-[34px]" />
    <DockApp id="red" cls="ml-[33px]" />
    <div className="w-[2px] h-[118px] bg-[#3f2a70] ml-[49px]" />
    <DockApp id="word" dot cls="ml-[47px]" />
    <DockApp id="ij" dot cls="ml-[34px]" />
    <DockApp id="excel" dot cls="ml-[34px]" />
    <DockApp id="elephant" dot cls="ml-[34px]" />
    <DockApp id="postman" dot cls="ml-[34px]" />
    <DockApp id="tableau" dot cls="ml-[33px]" />
    <div className="w-[2px] h-[118px] bg-[#3f2a70] ml-[48px]" />
    <DockApp id="trash" cls="ml-[49px]" />
  </div>
)

/* ---------- floating screenshot preview ---------- */
const linePts = "333,250 346,365 358,292 370,348 382,340 394,343 406,217 418,280 430,300 442,342 454,347 466,340 477,297 490,347 502,350 514,290 526,312 538,375 550,377 562,340 574,320 586,368 598,202 610,345 622,360 634,362 646,340 658,312 670,382 682,380 694,368 706,340 718,362 730,367 742,345 754,355 766,382 780,378"

const Preview = () => (
  <div className="absolute left-[2552px] top-[1410px] w-[304px] h-[196px] bg-white rounded-[12px] shadow-[0_2px_8px_rgba(0,0,0,0.25)] flex items-center justify-center">
    <svg width="288" height="180" viewBox="60 55 864 540" className="block">
      <rect x="60" y="55" width="864" height="540" fill="#f4f4f4" />
      <rect x="60" y="55" width="864" height="14" fill="#3f1696" />
      <rect x="60" y="69" width="864" height="16" fill="#efedf3" />
      <circle cx="68" cy="77" r="3.5" fill="#ff5f57" /><circle cx="80" cy="77" r="3.5" fill="#febc2e" /><circle cx="92" cy="77" r="3.5" fill="#28c840" />
      <rect x="420" y="74" width="145" height="6" fill="#888" />
      <rect x="70" y="94" width="840" height="8" fill="#cfcfcf" opacity=".7" />
      <rect x="60" y="110" width="125" height="404" fill="#ffffff" />
      <rect x="68" y="130" width="110" height="10" fill="#e2e2e2" />
      {measures.concat(measures.slice(0, 6)).map((m, i) => (
        <g key={i}>
          <rect x="76" y={185 + i * 12.6} width="6" height="5" fill="#4a9f7e" />
          <rect x="88" y={185 + i * 12.6} width={28 + (m.length % 7) * 5} height="5" fill="#9a9a9a" />
        </g>
      ))}
      <rect x="190" y="110" width="90" height="40" fill="#fafafa" />
      <rect x="190" y="155" width="90" height="45" fill="#fafafa" />
      <rect x="195" y="171" width="84" height="11" rx="5" fill="#4b94b4" />
      <rect x="190" y="205" width="90" height="190" fill="#fafafa" />
      <rect x="196" y="318" width="80" height="11" rx="5" fill="#4b94b4" />
      <rect x="290" y="110" width="630" height="20" fill="#fafafa" />
      <rect x="290" y="132" width="630" height="17" fill="#fafafa" />
      <rect x="362" y="112" width="88" height="12" rx="6" fill="#4b94b4" />
      <rect x="362" y="133" width="88" height="13" rx="6" fill="#04b27f" />
      <rect x="452" y="133" width="88" height="13" rx="6" fill="#04b27f" />
      <rect x="286" y="152" width="538" height="356" fill="#16f2dc" />
      <rect x="828" y="168" width="92" height="26" fill="#16f2dc" />
      <rect x="830" y="171" width="8" height="8" fill="#4c6f9f" /><rect x="830" y="183" width="8" height="8" fill="#e8202a" />
      <path d="M330 222H782M330 263H782M330 304H782M330 345H782M290 397H820" stroke="#7ff0e4" strokeWidth="1.5" />
      <path d="M330 190V398M782 190V398" stroke="#60d8cc" strokeWidth="1" />
      <polyline points={linePts} fill="none" stroke="#3f87b0" strokeWidth="2.5" />
      {linePts.split(" ").map((p, i) => (
        <rect key={p} x={333 + i * 12.1 - 2.5} y={(i < 10 ? 218 + i * 6.2 : 278 + (i - 10) * 2.6) - 2.5} width="5" height="5" fill="#e8202a" />
      ))}
      {linePts.split(" ").map((p, i) => (
        <path key={p} d={`M${333 + i * 12.1} 402v${24 + ((i * 7) % 5) * 8}`} stroke="#4bb8b0" strokeWidth="3" strokeDasharray="2 1" />
      ))}
      <rect x="328" y="496" width="456" height="9" fill="#ffffff" />
      <rect x="60" y="514" width="864" height="14" fill="#e2e2e2" />
      <rect x="60" y="530" width="864" height="12" fill="#e8e8e8" />
      <rect x="60" y="542" width="864" height="50" fill="#17083a" />
      <rect x="146" y="545" width="692" height="44" rx="10" fill="#6a5590" />
      {["#2aa0f8", "#cbc5d4", "#777777", "#f3f3f3", "#ffffff", "#f58a42", "#d9502f", "#f5f5f5", "#fb0f22", "#1f5fb5", "#0b0414", "#187a46", "#2f8df5", "#ff6c37", "#f2f4f6", "#d4d4d4"].map((c, i) => (
        <rect key={i} x={152 + (i > 8 ? i * 41 + 18 : i * 41) + (i > 14 ? 19 : 0)} y="550" width="32" height="32" rx="7" fill={c} />
      ))}
    </svg>
  </div>
)

/* ---------- menu bar ---------- */
const menu = ["File", "Data", "Worksheet", "Dashboard", "Story", "Analysis", "Map", "Format", "Server", "Window", "Help"]

const MenuBar = () => (
  <div className="h-[50px] pb-[3px] flex items-center bg-[linear-gradient(90deg,#46178e,#30169f)] text-[#f4f0fb] font-[Inter] text-[26px] shrink-0">
    <svg className="ml-[41px]" width="22" height="26" viewBox="0 0 22 26" fill="#f4f0fb">
      <path d="M15 0c.2 2.2-1.6 5-4.500 5C10.300 2.700 12.500.300 15 0zM18 13.700c0 3 2.600 4 3 4.200-.8 2.700-3 7.600-5.600 7.600-1.500 0-2.500-1-4.300-1-1.800 0-3 1-4.400 1C3.700 25.500 0 19 0 14c0-4.600 3-7.200 6-7.200 1.700 0 3.300 1.200 4.400 1.200 1 0 2.900-1.300 4.900-1.200 1 0 3.600.4 5.100 2.700-.2.100-2.400 1.500-2.400 4.200z" />
    </svg>
    <span className="ml-[43px] font-bold">Tableau</span>
    <div className="ml-[40px] flex gap-[39px]">{menu.map((m) => <span key={m}>{m}</span>)}</div>
    <div className="flex-1" />
    <svg width="28" height="34" viewBox="0 0 28 34" fill="#f4f0fb"><path d="M14 0l12 5v14c0 8-6 12-12 15C8 31 2 27 2 19V5z" /><path d="M8 10h12v12H8zM8 16h12M14 10v12" stroke="#30169f" strokeWidth="2" fill="none" /></svg>
    <svg className="ml-[38px]" width="52" height="26" viewBox="0 0 52 26" fill="none"><rect x="1" y="1" width="44" height="24" rx="6" stroke="#f4f0fb" strokeWidth="2" /><rect x="5" y="5" width="26" height="16" rx="2" fill="#f4f0fb" /><path d="M26 2l-8 12h7l-3 10 10-13h-7z" fill="#f4f0fb" stroke="#30169f" /><rect x="47" y="9" width="3" height="8" fill="#f4f0fb" /></svg>
    <svg className="ml-[36px]" width="32" height="26" viewBox="0 0 32 26" fill="none" stroke="#f4f0fb" strokeWidth="3.4"><path d="M2 9a20 20 0 0 1 28 0M7 14.500a13 13 0 0 1 18 0M11.500 19a7 7 0 0 1 9 0" /><circle cx="16" cy="24" r="1.500" fill="#f4f0fb" /></svg>
    <svg className="ml-[39px]" width="26" height="26" viewBox="0 0 26 26" fill="none" stroke="#f4f0fb" strokeWidth="2.800"><circle cx="11" cy="11" r="8" /><path d="M17 17l7 7" /></svg>
    <svg className="ml-[37px]" width="30" height="26" viewBox="0 0 30 26"><rect x="1" y="1" width="28" height="11" rx="5.500" fill="none" stroke="#f4f0fb" strokeWidth="2" /><circle cx="9" cy="6.500" r="3.500" fill="#f4f0fb" /><rect x="0" y="14" width="30" height="12" rx="6" fill="#f4f0fb" /><circle cx="22" cy="20" r="3.500" fill="#30169f" /></svg>
    <svg className="ml-[34px]" width="26" height="26" viewBox="0 0 26 26"><defs><radialGradient id="si"><stop offset="0" stopColor="#f4f4ff" /><stop offset=".5" stopColor="#3fb5d8" /><stop offset="1" stopColor="#a03fb0" /></radialGradient></defs><circle cx="13" cy="13" r="12" fill="url(#si)" /><path d="M4 16c5-8 10 6 18-6" stroke="#f0608a" strokeWidth="2.500" fill="none" /></svg>
    <span className="ml-[34px] mr-[40px] whitespace-pre tracking-[0.4px]">Sat 14 Oct  2:13 PM</span>
  </div>
)

const TitleBar = () => (
  <div className="h-[58px] shrink-0 bg-[#efedf3] border-b-[2px] border-[#d4d4d6] flex items-center rounded-t-[20px] relative">
    <div className="flex gap-[10px] ml-[16px]">
      <div className="w-[23px] h-[23px] rounded-full bg-[#ff5f57] border border-[#e0443e]" />
      <div className="w-[23px] h-[23px] rounded-full bg-[#febc2e] border border-[#dfa023]" />
      <div className="w-[23px] h-[23px] rounded-full bg-[#28c840] border border-[#1aab29]" />
    </div>
    <div className="ml-[1091px] flex items-center gap-[8px] font-[Inter] font-semibold text-[27px] text-[#4b4b4b]">
      <div className="w-[28px] h-[30px] bg-white shadow-[0_1px_1px_rgba(0,0,0,0.3)] flex items-center justify-center"><TableauMark size={24} mono="#3f86ae" /></div>
      Tableau - tableau complete project
    </div>
  </div>
)

const App = () => (
  <div className="relative w-[2880px] h-[1800px] overflow-hidden flex flex-col bg-[linear-gradient(90deg,#12052f_0%,#12052f_60%,#47117c_66%,#47117c_74%,#1a063c_84%,#12052f_100%)]">
    <MenuBar />
    <div className="h-[1580px] shrink-0 flex flex-col rounded-[20px] bg-[#f5f5f5]">
      <TitleBar />
      <Toolbar />
      <div className="flex h-[1342px] shrink-0 overflow-hidden">
        <DataPane />
        <Cards />
        <div className="flex-1 min-w-0 pr-[12px] flex flex-col gap-[13px]">
          <Shelf name="Columns" icon={<svg width="22" height="18" viewBox="0 0 22 18" fill="none" stroke="#555" strokeWidth="2.500"><path d="M3 0v18M11 0v18M19 0v18" /></svg>} />
          <Shelf name="Rows" icon={<svg width="22" height="18" viewBox="0 0 22 18" fill="none" stroke="#555" strokeWidth="2.500"><path d="M0 3h22M0 9h22M0 15h22" strokeDasharray="4 1.500" /></svg>} />
          <div className="flex gap-[13px] items-start">
            <div className="w-[1795px] h-[1193px] shrink-0 border-[2px] border-[#d4d4d4] bg-[#16f2dc] font-[Lato]">
              <div className="h-[102px] pb-[8px] pl-[20px] flex items-center text-[43px] font-light text-[#2f3f3f]">Sheet 4</div>
              <div className="pl-[26px]"><Treemap /></div>
            </div>
            <Legend />
          </div>
        </div>
      </div>
      <TabBar />
      <StatusBar />
    </div>
    <Dock />
    <Preview />
  </div>
)

export default App
